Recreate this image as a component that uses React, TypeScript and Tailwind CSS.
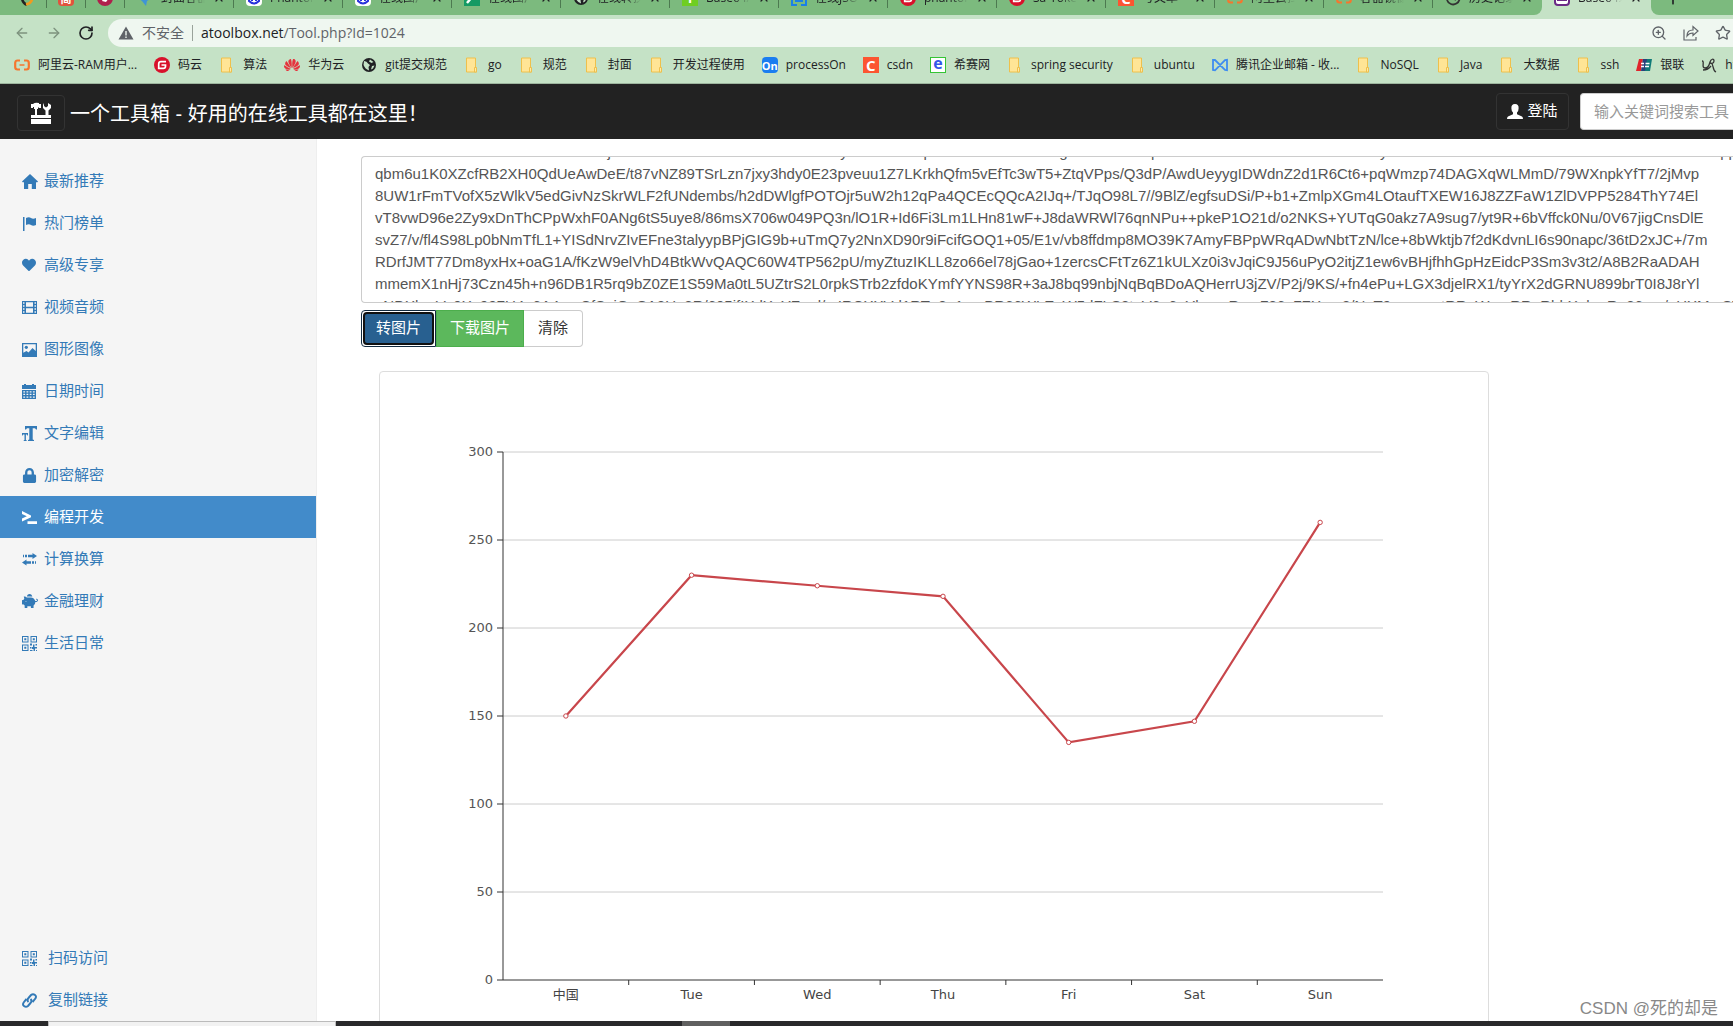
import { useEffect, useRef, type ReactNode } from "react";
import { ArrowLeft, ArrowRight, Plus, RotateCw, Star, X, ZoomIn } from "lucide-react";
import { FaHeart, FaLock, FaPiggyBank } from "react-icons/fa";
import { SiHuawei } from "react-icons/si";

const Folder = () => (
  <svg viewBox="0 0 16 16" className="size-4">
    <path d="M2.500 1h9v10h1v4h-10z" fill="#ffe596" stroke="#eec04c" />
    <path d="M10.500 15v-4.500h2V15z" fill="#ffe9a8" stroke="#eec04c" />
  </svg>
);

const Aliyun = () => (
  <svg viewBox="0 0 16 16" className="size-4" fill="none" stroke="#f5762e" strokeWidth="2.2">
    <path d="M6 3.5H3.5Q1.2 3.5 1.2 6v4q0 2.5 2.3 2.5H6M10 3.5h2.500q2.300 0 2.300 2.500v4q0 2.500-2.300 2.500H10" />
    <path d="M5.500 8h5" strokeWidth="1.500" />
  </svg>
);

const Gitee = () => (
  <svg viewBox="0 0 16 16" className="size-4">
    <circle cx="8" cy="8" r="8" fill="#d8112b" />
    <path d="M12 4.600H7q-2.300 0-2.300 2.300v4.500h4.600q2.200 0 2.200-2.200V8H7.500" fill="none" stroke="#fff" strokeWidth="1.700" />
  </svg>
);

const Globe = () => (
  <svg viewBox="0 0 16 16" className="size-4">
    <circle cx="8" cy="8" r="7" fill="#202124" />
    <path d="M3 4q3 0 4 2.500L9 8 7.500 10 8 13.500Q4 12 2.500 8zM9 2.500l-1 2 2.500 1.500 2-1zM11 9l2.500-.5-1.500 3-2 1z" fill="#c5e2c6" />
  </svg>
);

const Tencent = () => (
  <svg viewBox="0 0 16 16" className="size-4" fill="none" stroke="#3f8df0" strokeWidth="1.800">
    <path d="M1 3v10l2 .3L13 3l2-.3v10.600l-2-.3L3 3z" />
  </svg>
);

const UnionPay = () => (
  <svg viewBox="0 0 16 16" className="size-4">
    <path d="M3 2h4L5 14H0z" fill="#e0252c" />
    <path d="M7 2h5l-2 12H5z" fill="#28407c" />
    <path d="M11 2h5l-2 12H9z" fill="#107a78" />
    <path d="M5 6.500h3M5 9.500h3M9.500 6.500h4M9 9.500h4" stroke="#fff" strokeWidth="1.400" />
  </svg>
);

const Vine = () => (
  <svg viewBox="0 0 16 16" className="size-4" fill="none" stroke="#333" strokeWidth="1.300">
    <path d="M1 4c3 0-1 7 3 7s4-3 5-6 4-4 4-1-4 3-4 1M10 6c3 1 1 7 5 9M2 13q5 0 8-4" />
  </svg>
);

const Square = ({ className, children }: { className: string; children?: ReactNode }) => (
  <span className={`flex size-4 items-center justify-center overflow-hidden leading-none ${className}`}>
    {children}
  </span>
);

const Csdn = () => <Square className="bg-[#fc5531] text-[15px] font-bold text-white">C</Square>;

const Baidu = () => (
  <Square className="rounded-sm bg-white">
    <svg viewBox="0 0 16 16" className="size-4" fill="none" stroke="#2a32dc" strokeWidth="2">
      <path d="M3 7q5-6 10 0v4q-5 5-10 0zM6 8v3M10 8v3" />
    </svg>
  </Square>
);

const pinned = [
  <svg viewBox="0 0 16 16" className="size-4" fill="none" strokeWidth="2.500">
    <path d="M3 7q0 6 5 8" stroke="#222" />
    <path d="M7 14.500q5-1 6-5" stroke="#f39a1e" />
  </svg>,
  <Square className="rounded-sm bg-[#e1523d] text-[11px] font-bold text-white">简</Square>,
  <svg viewBox="0 0 16 16" className="size-4">
    <circle cx="8" cy="8" r="8" fill="#b0204c" />
    <path d="M5 11q3-6 7-3l-3 4z" fill="#fff" />
  </svg>,
];

const tabs = [
  {
    name: "封面客器",
    icon: (
      <svg viewBox="0 0 16 16" className="size-4" fill="#3f94d6">
        <path d="M1 8h14l-5 3-1 5-4-5z" />
      </svg>
    ),
  },
  { name: "PhantomJS", icon: <Baidu /> },
  { name: "在线图片", icon: <Baidu /> },
  {
    name: "在线图片",
    icon: (
      <Square className="bg-[#159a63]">
        <svg viewBox="0 0 16 16" className="size-4">
          <path d="M3 13L8 7" stroke="#fff" strokeWidth="2.500" />
        </svg>
      </Square>
    ),
  },
  { name: "在线转换", icon: <Globe /> },
  { name: "Base64/图", icon: <Square className="bg-[#6fce22] text-[13px] font-bold text-white">Y</Square> },
  {
    name: "在线JSON",
    icon: (
      <svg viewBox="0 0 16 16" className="size-4" fill="none" stroke="#1a7fe8" strokeWidth="2">
        <path d="M1 6v9h5M15 6v9h-5M5 6v5h6V6" />
      </svg>
    ),
  },
  { name: "phantomjs", icon: <Gitee /> },
  { name: "Sa-Token", icon: <Gitee /> },
  { name: "写文章（", icon: <Csdn /> },
  { name: "阿里云拉", icon: <Aliyun /> },
  { name: "容器镜像", icon: <Aliyun /> },
  {
    name: "历史记录",
    icon: (
      <svg viewBox="0 0 16 16" className="size-4" fill="none" stroke="#333" strokeWidth="1.800">
        <path d="M3 4a6.500 6.500 0 1 1-1 6M8 4v4l3 2" />
      </svg>
    ),
  },
];

const bookmarks = [
  { name: "阿里云-RAM用户...", icon: <Aliyun /> },
  { name: "码云", icon: <Gitee /> },
  { name: "算法", icon: <Folder /> },
  { name: "华为云", icon: <SiHuawei className="size-4 text-[#e5343d]" /> },
  { name: "git提交规范", icon: <Globe /> },
  { name: "go", icon: <Folder /> },
  { name: "规范", icon: <Folder /> },
  { name: "封面", icon: <Folder /> },
  { name: "开发过程使用", icon: <Folder /> },
  { name: "processOn", icon: <Square className="rounded-sm bg-[#1a7df0] text-[11px] font-bold text-white">On</Square> },
  { name: "csdn", icon: <Csdn /> },
  {
    name: "希赛网",
    icon: <Square className="border border-[#35c435] bg-white pb-1 text-[16px] font-bold text-[#3556e8]">e</Square>,
  },
  { name: "spring security", icon: <Folder /> },
  { name: "ubuntu", icon: <Folder /> },
  { name: "腾讯企业邮箱 - 收...", icon: <Tencent /> },
  { name: "NoSQL", icon: <Folder /> },
  { name: "Java", icon: <Folder /> },
  { name: "大数据", icon: <Folder /> },
  { name: "ssh", icon: <Folder /> },
  { name: "银联", icon: <UnionPay /> },
  { name: "html", icon: <Vine /> },
];

const Glyph = ({ children }: { children: ReactNode }) => (
  <svg viewBox="0 0 15 15" className="size-[15px]" fill="currentColor">
    {children}
  </svg>
);

const QrCode = () => (
  <Glyph>
    <path
      fillRule="evenodd"
      d="M0 0h6.500v6.500H0zM1 1v4.500h4.500V1zM8.500 0H15v6.500H8.500zM9.500 1v4.500H14V1zM0 8.500h6.500V15H0zM1 9.500V14h4.500V9.500z"
    />
    <path d="M2.300 2.300h2v2h-2zM10.800 2.300h2v2h-2zM2.300 10.800h2v2h-2zM8 7.500h2v2H8zM11 8.500h1.500V11H15v1.500h-2V15h-1.500v-2H10v-2h1zM8 11h1.500v1.500H8zM8 14h2.500v1H8zM13.500 8H15v1.500h-1.500zM14 14h1v1h-1z" />
  </Glyph>
);

const menu = [
  {
    name: "最新推荐",
    icon: (
      <svg viewBox="0 0 16 15" className="h-[15px] w-4" fill="currentColor">
        <path d="M8 0l8 7.500-.6.800H14V15H9.800v-5H6.200v5H2V8.300H.6L0 7.500z" />
      </svg>
    ),
  },
  {
    name: "热门榜单",
    icon: (
      <Glyph>
        <path d="M1 1h1.500v14H1zM4 2q3-1.500 5 0t5 0v7q-3 1.500-5 0T4 9z" />
      </Glyph>
    ),
  },
  { name: "高级专享", icon: <FaHeart className="size-[14px]" /> },
  {
    name: "视频音频",
    icon: (
      <Glyph>
        <path
          fillRule="evenodd"
          d="M0 1h15v13H0zM4 2.200v4.500h7V2.200zM4 8.200v4.500h7V8.200zM1 2.200v1.500h1.500V2.200zM1 5.200v1.500h1.500V5.200zM1 8.200v1.500h1.500V8.200zM1 11.200v1.500h1.500v-1.500zM12.500 2.200v1.500H14V2.200zM12.500 5.200v1.500H14V5.200zM12.500 8.200v1.500H14V8.200zM12.500 11.200v1.500H14v-1.500z"
        />
      </Glyph>
    ),
  },
  {
    name: "图形图像",
    icon: (
      <Glyph>
        <path fillRule="evenodd" d="M0 1h15v14H0zM1.300 2.300v8.500L4.500 9 6.500 10.500 10.500 6l3.200 3V2.300z" />
        <circle cx="4.300" cy="5.300" r="1.600" />
      </Glyph>
    ),
  },
  {
    name: "日期时间",
    icon: (
      <Glyph>
        <path d="M0 1h2V0h2v1h6V0h2v1h2v4H0z" />
        <path
          fillRule="evenodd"
          d="M0 6h14v9H0zM1.300 7.200v1.300h1.800V7.200zM4.500 7.200v1.300h1.800V7.200zM7.700 7.200v1.300h1.800V7.200zM10.900 7.200v1.300h1.800V7.200zM1.300 9.800v1.300h1.800V9.800zM4.500 9.800v1.300h1.800V9.800zM7.700 9.800v1.300h1.800V9.800zM10.900 9.800v1.300h1.800V9.800zM1.300 12.400v1.300h1.800v-1.300zM4.500 12.400v1.300h1.800v-1.300zM7.700 12.400v1.300h1.800v-1.300zM10.900 12.400v1.300h1.800v-1.300z"
        />
      </Glyph>
    ),
  },
  {
    name: "文字编辑",
    icon: (
      <Glyph>
        <path d="M3 0h12v3.500h-1l-1-1.300h-2.300V13.500l1.300.5v1H6v-1l1.300-.5V2.200H5L4 3.500H3z" />
        <path d="M0 7h6v2.500h-.7L5 8.500H3.900V14l.8.300v.7h-3v-.7l.8-.300V8.500H1L.7 9.500H0z" />
      </Glyph>
    ),
  },
  { name: "加密解密", icon: <FaLock className="size-[15px]" /> },
  {
    name: "编程开发",
    active: true,
    icon: (
      <Glyph>
        <path d="M0 1l9 4.400v1.800L0 11.500V8.600l4.800-2.300L0 4zM5.500 11.300H15V14H5.500z" />
      </Glyph>
    ),
  },
  {
    name: "计算换算",
    icon: (
      <Glyph>
        <path d="M1 2.800h1v2.400H1zM3 2.800h2v2.400H3zM6 2.800h4.500V1L15 4l-4.500 3V5.200H6zM14 9.300h-1v2.400h1zM12 9.300h-2v2.400h2zM9 9.300H4.500V7.500L0 10.500l4.500 3v-1.800H9z" />
      </Glyph>
    ),
  },
  { name: "金融理财", icon: <FaPiggyBank className="size-4 -scale-x-100" /> },
  { name: "生活日常", icon: <QrCode /> },
];

const Chain = () => (
  <svg viewBox="0 0 15 15" className="size-[15px]" fill="none" stroke="currentColor" strokeWidth="2">
    <path d="M6.500 9q-2-2 0-4l2.500-3q2-1.500 4 0t0 4l-2.500 3" />
    <path d="M8.500 6q2 2 0 4L6 13q-2 1.500-4 0t0-4l2.500-3" />
  </svg>
);

const base64 = [
  "nZrVNuSmR3x0Kz1TvLHcWbtFoKjE7rR0AxNhDdTZuVcWLoKSf8rbEyMJH1UcX3pRZxsTaVfnBzk0wKgMhTn3XbV8pLRCsEDkWo6vFzNlYtHn4xKuSbyR2mZV1WdTfKaXc9ohLNuEzSr3MvBtJ0DkHw5PppFnXlZRs8uCTvKeWpMh3NaVdqUbXz6kTLcHoFyESrJ",
  "qbm6u1K0XZcfRB2XH0QdUeAwDeE/t87vNZ89TSrLzn7jxy3hdy0E23pveuu1Z7LKrkhQfm5vEfTc3wT5+ZtqVPps/Q3dP/AwdUeyygIDWdnZ2d1R6Ct6+pqWmzp74DAGXqWLMmD/79WXnpkYfT7/2jMvp",
  "8UW1rFmTVofX5zWlkV5edGivNzSkrWLF2fUNdembs/h2dDWlgfPOTOjr5uW2h12qPa4QCEcQQcA2IJq+/TJqO98L7//9BlZ/egfsuDSi/P+b1+ZmlpXGm4LOtaufTXEW16J8ZZFaW1ZlDVPP5284ThY74El",
  "vT8vwD96e2Zy9xDnThCPpWxhF0ANg6tS5uye8/86msX706w049PQ3n/lO1R+Id6Fi3Lm1LHn81wF+J8daWRWl76qnNPu++pkeP1O21d/o2NKS+YUTqG0akz7A9sug7/yt9R+6bVffck0Nu/0V67jigCnsDlE",
  "svZ7/v/fl4S98Lp0bNmTfL1+YISdNrvZIvEFne3talyypBPjGIG9b+uTmQ7y2NnXD90r9iFcifGOQ1+05/E1v/vb8ffdmp8MO39K7AmyFBPpWRqADwNbtTzN/lce+8bWktjb7f2dKdvnLI6s90napc/36tD2xJC+/7m",
  "RDrfJMT77Dm8yxHx+oaG1A/fKzW9elVhD4BtkWvQAQC60W4TP562pU/myZtuzIKLL8zo66el78jGao+1zercsCFtTz6Z1kULXz0i3vJqiC9J56uPyO2itjZ1ew6vBHjfhhGpHzEidcP3Sm3v3t2/A8B2RaADAH",
  "mmemX1nHj73Czn45h+n96DB1R5rq9bZ0ZE1S59Ma0tL5UZtrS2L0rpkSTrb2zfdoKYmfYYNS98R+3aJ8bq99nbjNqBqBDoAQHerrU3jZV/P2j/9KS/+fn4ePu+LGX3djelRX1/tyYrX2dGRNU899brT0I8J8rYl",
  "eNDXhmVe0Xe997U4n6A4meCfSniGnSA2Ue8R/605jfIXdXnYZmd/mIRCXXVd1RTn8e1nmBR66WLEnW5dFLS8tnV6n6eYhmmRme786n7ZXme8/NeT9emmnntRRnWnmRRnRbhXnhmRn86mn/nHXMmSTheRT",
].join("\n");

const days = ["中国", "Tue", "Wed", "Thu", "Fri", "Sat", "Sun"];
const values = [150, 230, 224, 218, 135, 147, 260];
const ticks = [0, 50, 100, 150, 200, 250, 300];

const left = 123;
const right = 1003;
const bottom = 608;
const step = (right - left) / days.length;
const px = (i: number) => left + step * (i + 0.5);
const py = (v: number) => bottom - v * 1.76;

const LineChart = () => (
  <svg viewBox="0 0 1108 650" className="block w-full font-['DejaVu_Sans','Noto_Sans_CJK_SC',sans-serif] text-[13px]">
    {ticks.map((t) => (
      <g key={t}>
        {t > 0 && <path d={`M${left} ${py(t)}H${right}`} stroke="#ccc" />}
        <path d={`M${left - 6} ${py(t)}H${left}`} stroke="#333" />
        <text x={left - 10} y={py(t) + 4} textAnchor="end" fill="#555">
          {t}
        </text>
      </g>
    ))}
    <path d={`M${left} ${py(300)}V${bottom}H${right}`} fill="none" stroke="#333" />
    {days.map((day, i) => (
      <g key={day}>
        {i > 0 && <path d={`M${left + step * i} ${bottom}v5`} stroke="#333" />}
        <text x={px(i)} y={bottom + 19} textAnchor="middle" fill="#444">
          {day}
        </text>
      </g>
    ))}
    <polyline points={values.map((v, i) => `${px(i)},${py(v)}`).join(" ")} fill="none" stroke="#c8464b" strokeWidth="2.2" />
    {values.map((v, i) => (
      <circle key={i} cx={px(i)} cy={py(v)} r="2.200" fill="#fff" stroke="#c8464b" />
    ))}
  </svg>
);

const Browser = () => (
  <div className="bg-[#c5e2c6] font-['Open_Sans','Noto_Sans_CJK_SC',sans-serif] text-[#202124]">
    <div className="flex h-[15px] items-end overflow-hidden">
      <div className="flex shrink-0 rounded-br-lg bg-[#7cba7e] pl-2">
        {pinned.map((icon, i) => (
          <div key={i} className="flex h-[34px] w-[39px] shrink-0 items-center justify-end">
            <span className="mr-[11px]">{icon}</span>
            <span className="h-5 w-px bg-[#4d7a50]" />
          </div>
        ))}
        {tabs.map(({ name, icon }, i) => (
          <div key={i} className="flex h-[34px] w-[109px] shrink-0 items-center pl-3">
            {icon}
            <span className="ml-2 w-[44px] overflow-hidden mask-r-from-60% text-xs whitespace-nowrap">{name}</span>
            <X className="ml-2 size-3" strokeWidth={2.5} />
            {i < tabs.length - 1 && <span className="ml-auto h-5 w-px bg-[#4d7a50]" />}
          </div>
        ))}
      </div>
      <div className="flex h-[34px] w-[109px] shrink-0 items-center pl-3">
        <Square className="rounded-sm border-2 border-[#6b2a86] bg-white text-[#6b2a86]">
          <svg viewBox="0 0 12 12" className="size-3" stroke="currentColor">
            <path d="M1 5.500h10M1 8.500h10" />
          </svg>
        </Square>
        <span className="ml-2 w-[44px] overflow-hidden mask-r-from-60% text-xs whitespace-nowrap">Base64编</span>
        <X className="ml-2 size-3" strokeWidth={2.5} />
      </div>
      <div className="flex h-[34px] flex-1 items-center rounded-bl-lg bg-[#7cba7e] pl-3">
        <Plus className="size-5" />
      </div>
    </div>
    <div className="flex items-center pt-1 pl-[14px]">
      <div className="flex gap-4">
        <ArrowLeft className="size-4 text-[#7d927e]" />
        <ArrowRight className="size-4 text-[#7d927e]" />
        <RotateCw className="size-4" strokeWidth={2.5} />
      </div>
      <div className="ml-[14px] flex h-7 flex-1 items-center rounded-l-full bg-[#eff7f0] pr-[2px] pl-[10px] text-sm text-[#5f6368]">
        <svg viewBox="0 0 16 16" className="size-4" fill="#5f6368">
          <path fillRule="evenodd" d="M8 1.500L15.500 14.500H.5zM7.300 6v4.500h1.400V6zM7.300 11.500v1.500h1.400v-1.500z" />
        </svg>
        <span className="ml-2">不安全</span>
        <span className="mx-2 h-4 w-px bg-[#9aa39b]" />
        <span className="flex-1">
          <span className="text-[#202124]">atoolbox.net</span>/Tool.php?Id=1024
        </span>
        <ZoomIn className="size-4" />
        <svg viewBox="0 0 16 16" className="ml-4 size-4" fill="none" stroke="#5f6368" strokeWidth="1.200">
          <path d="M1 4.500V15h12v-3M4 11q0-6 6-6V1.500L15 6l-5 4.500V8q-4 0-6 3z" />
        </svg>
        <Star className="ml-4 size-4" />
      </div>
    </div>
    <div className="flex h-[37px] items-center gap-[17px] overflow-hidden border-b border-[#9db59e] pl-[14px] text-xs whitespace-nowrap">
      {bookmarks.map(({ name, icon }) => (
        <a key={name} href="#" className="flex shrink-0 items-center gap-2">
          {icon}
          {name}
        </a>
      ))}
    </div>
  </div>
);

const NavBar = () => (
  <nav className="flex h-[55px] shrink-0 items-start bg-[#222] text-white">
    <a href="#" aria-label="一个工具箱" className="mt-[11px] ml-[17px] flex h-9 w-12 items-center justify-center rounded border border-[#333]">
      <svg viewBox="0 0 22 22" className="size-[22px]" fill="#fff">
        <path d="M1 13h20v3H1zM1 17h20v5H1z" />
        <path d="M1 2h2q2-2 6-1v1h2v4H9L8 5v2H7v6H5V7H4V5H3v1H1zM14 1v3l2 1.500L18 4V1l3 2v3l-2.500 2.500V13h-3V8.500L13 6V3z" />
      </svg>
    </a>
    <h1 className="mt-4 ml-[5px] text-xl leading-[28px]">一个工具箱 - 好用的在线工具都在这里！</h1>
    <div className="mt-[9px] ml-auto flex gap-[11px] text-[15px]">
      <button className="flex h-[37px] w-[73px] items-center justify-center gap-1 rounded border border-[#333]">
        <svg viewBox="0 0 16 16" className="size-4" fill="#fff">
          <path d="M8 0q4 0 3.600 4.500 0 2.500-1.600 4v1.800l5 2.200q1 .5 1 2.500H0q0-2 1-2.500l5-2.200V8.500q-1.600-1.500-1.600-4Q4 0 8 0z" />
        </svg>
        登陆
      </button>
      <input
        aria-label="搜索工具"
        placeholder="输入关键词搜索工具"
        className="h-[37px] w-[153px] rounded-l border border-r-0 border-[#ccc] bg-white pl-[13px] placeholder:text-[#999]"
      />
    </div>
  </nav>
);

const SideBar = () => (
  <aside className="flex w-[317px] shrink-0 flex-col border-r border-[#eee] bg-[#f5f5f5] pt-[21px] text-[15px] text-[#337ab7]">
    <ul>
      {menu.map(({ name, icon, active }) => (
        <li key={name}>
          <a
            href="#"
            className={`flex h-[42px] items-center gap-[6px] pl-[22px] ${active ? "bg-[#428bca] text-white" : ""}`}>
            <span className="flex w-4 justify-start">{icon}</span>
            {name}
          </a>
        </li>
      ))}
    </ul>
    <ul className="mt-auto">
      <li>
        <a href="#" className="flex h-[42px] items-center gap-[11px] pl-[22px]">
          <QrCode />
          扫码访问
        </a>
      </li>
      <li>
        <a href="#" className="flex h-[42px] items-center gap-[11px] pl-[22px]">
          <Chain />
          复制链接
        </a>
      </li>
    </ul>
  </aside>
);

const Converter = () => {
  const input = useRef<HTMLTextAreaElement>(null);

  useEffect(() => {
    if (input.current) input.current.scrollTop = 22;
  }, []);

  return (
    <main className="min-w-0 flex-1 overflow-hidden bg-white pt-[17px] pl-[44px]">
      <textarea
        ref={input}
        aria-label="Base64"
        wrap="off"
        spellCheck={false}
        defaultValue={base64}
        className="block h-[147px] w-full resize-none overflow-hidden rounded-l border border-r-0 border-[#ccc] py-[6px] pl-[13px] text-[15px] leading-[22px] text-[#555]"
      />
      <div className="mt-[7px] flex h-[37px] text-[15px]">
        <button className="w-[75px] rounded-l border border-[#122b40] bg-white p-px text-white">
          <span className="flex h-full items-center justify-center rounded-sm border-2 border-[#101010] bg-[#286090]">
            转图片
          </span>
        </button>
        <button className="w-[88px] border border-[#4cae4c] bg-[#5cb85c] text-white">下载图片</button>
        <button className="w-[59px] rounded-r border border-l-0 border-[#ccc] text-[#333]">清除</button>
      </div>
      <div className="mt-6 ml-[18px] max-w-[1110px] rounded border border-[#ddd] pb-20">
        <LineChart />
      </div>
    </main>
  );
};

export default function App() {
  return (
    <div className="relative flex h-screen flex-col overflow-hidden font-['Liberation_Sans','Noto_Sans_CJK_SC',sans-serif]">
      <Browser />
      <NavBar />
      <div className="flex min-h-0 flex-1">
        <SideBar />
        <Converter />
      </div>
      <div className="flex h-[5px] shrink-0 bg-[#29292b]">
        <div className="ml-12 w-72 border border-b-0 border-[#bbb] bg-[#f2f2f2]" />
        <div className="ml-[346px] w-12 bg-[#606060]" />
      </div>
      <p className="absolute right-[15px] bottom-[5px] text-[17px] leading-6 text-[#888]">CSDN @死的却是</p>
    </div>
  );
}
